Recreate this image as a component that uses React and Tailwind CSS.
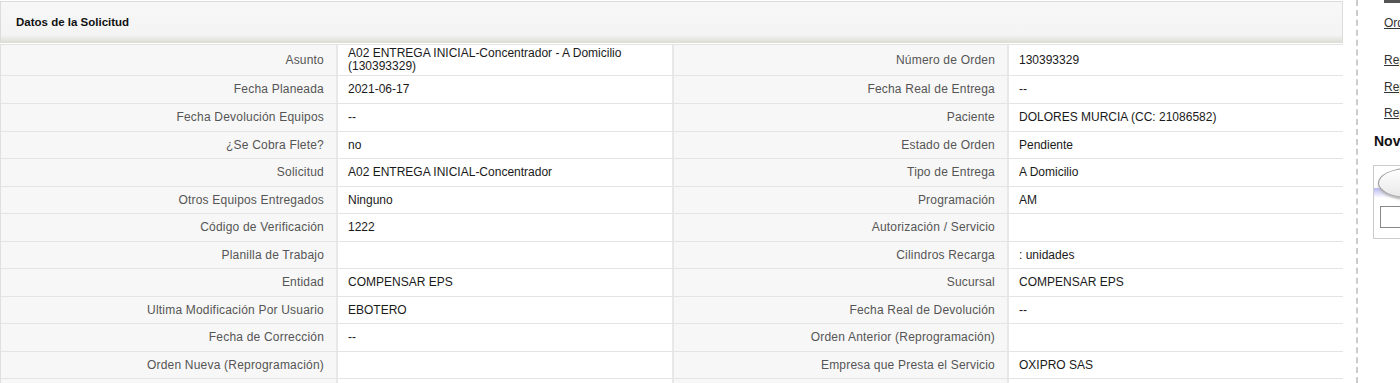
import React from "react";

const rows = [
  { h: "h-[31px]", l1: "Asunto", v1: "A02 ENTREGA INICIAL-Concentrador - A Domicilio (130393329)", l2: "Número de Orden", v2: "130393329" },
  { h: "h-[28px]", l1: "Fecha Planeada", v1: "2021-06-17", l2: "Fecha Real de Entrega", v2: "--" },
  { h: "h-[28px]", l1: "Fecha Devolución Equipos", v1: "--", l2: "Paciente", v2: "DOLORES MURCIA (CC: 21086582)" },
  { h: "h-[27px]", l1: "¿Se Cobra Flete?", v1: "no", l2: "Estado de Orden", v2: "Pendiente" },
  { h: "h-[28px]", l1: "Solicitud", v1: "A02 ENTREGA INICIAL-Concentrador", l2: "Tipo de Entrega", v2: "A Domicilio" },
  { h: "h-[27px]", l1: "Otros Equipos Entregados", v1: "Ninguno", l2: "Programación", v2: "AM" },
  { h: "h-[28px]", l1: "Código de Verificación", v1: "1222", l2: "Autorización / Servicio", v2: "" },
  { h: "h-[27px]", l1: "Planilla de Trabajo", v1: "", l2: "Cilindros Recarga", v2: ": unidades" },
  { h: "h-[28px]", l1: "Entidad", v1: "COMPENSAR EPS", l2: "Sucursal", v2: "COMPENSAR EPS" },
  { h: "h-[27px]", l1: "Ultima Modificación Por Usuario", v1: "EBOTERO", l2: "Fecha Real de Devolución", v2: "--" },
  { h: "h-[28px]", l1: "Fecha de Corrección", v1: "--", l2: "Orden Anterior (Reprogramación)", v2: "" },
  { h: "h-[27px]", l1: "Orden Nueva (Reprogramación)", v1: "", l2: "Empresa que Presta el Servicio", v2: "OXIPRO SAS" },
  { h: "h-[28px]", l1: "", v1: "", l2: "", v2: "" },
];

function Label({ text, first }) {
  return (
    <div
      className={`w-[335px] shrink-0 flex items-center justify-end pr-[12px] bg-[#f7f7f7] text-[#555] tracking-[0.2px] ${first ? "" : "border-l-2 border-[#e8e8e8]"}`}
    >
      <span className="text-right leading-[13px]">{text}</span>
    </div>
  );
}

function Value({ text }) {
  return (
    <div className="w-[336px] shrink-0 flex items-center pl-[10px] pr-[8px] bg-white text-[#1a1a1a] border-l-2 border-[#e8e8e8]">
      <span className="leading-[13px] max-w-[300px]">{text}</span>
    </div>
  );
}

export default function App() {
  return (
    <div
      className="flex w-[1400px] h-[383px] overflow-hidden bg-white text-[12px]"
      style={{ fontFamily: '"Liberation Sans", Arial, sans-serif' }}
    >
      <div className="w-[1343px] shrink-0 pt-[1px]">
        <div className="h-[42px] border-t border-l border-r border-[#dcdcdc] bg-gradient-to-b from-[#f7f7f7] via-[#f4f4f4] via-80% to-[#dcdcd4] flex items-center pl-[15px]">
          <span className="font-bold text-[11.5px] text-[#111]">Datos de la Solicitud</span>
        </div>
        <div className="mt-[1px] border-l border-[#e0e0e0]">
          {rows.map((r, i) => (
            <div key={i} className={`flex ${r.h} border-t border-[#e4e4e4]`}>
              <Label text={r.l1} first />
              <Value text={r.v1} />
              <Label text={r.l2} />
              <Value text={r.v2} />
            </div>
          ))}
        </div>
      </div>
      <div className="ml-[13px] w-[2px] shrink-0 border-l-2 border-dashed border-[#cccccc]" />
      <div className="flex-1 relative">
        <div className="absolute left-[26px] top-0 w-[30px] h-[3px] bg-[#555]" />
        <div className="pl-[26px] pt-[14px] flex flex-col text-[12px] text-[#333]">
          <span className="underline h-[37px]">Orden</span>
          <span className="underline h-[27px]">Reporte</span>
          <span className="underline h-[26px]">Reporte</span>
          <span className="underline h-[26px]">Reporte</span>
        </div>
        <div className="pl-[16px] pt-[1px] font-bold text-[14px] text-[#111]">Novedades</div>
        <div className="ml-[15px] mt-[13px] h-[74px] border border-[#cccccc] bg-white relative overflow-hidden">
          <div className="absolute left-0 top-[22px] w-[40px] h-[10px] bg-gradient-to-b from-[#b8b8f0] to-white" />
          <div className="absolute left-[4px] top-[2px] w-[60px] h-[30px] rounded-[50%] border border-[#999] bg-gradient-to-b from-white to-[#e8e8e8] shadow-[0_2px_2px_#bbb]" />
          <div className="absolute left-[6px] top-[40px] w-[40px] h-[22px] border border-[#888] bg-white" />
        </div>
      </div>
    </div>
  );
}
